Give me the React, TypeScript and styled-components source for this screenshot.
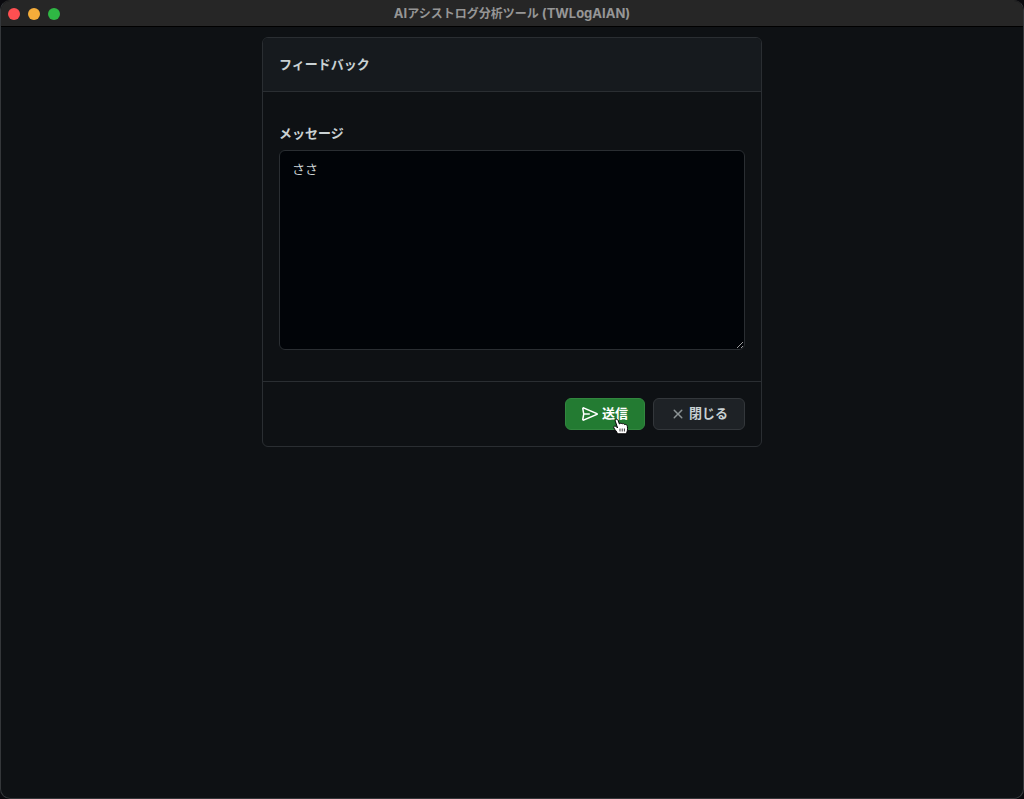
import React, { useState } from "react";
import styled, { createGlobalStyle } from "styled-components";

const GlobalStyle = createGlobalStyle`
  * { box-sizing: border-box; }
  html { background: #0a0a0e; color-scheme: dark; }
  body {
    margin: 0;
    color: #c9d1d3;
    font-family: "Liberation Sans", "Noto Sans CJK JP", sans-serif;
    font-size: 13px;
    line-height: 20px;
  }
`;

const Window = styled.div`
  display: flex;
  flex-direction: column;
  min-height: 100vh;
  background: #0e1114;
  border: 1px solid #34373a;
  border-top-color: #262626;
  border-radius: 10px;
  overflow: hidden;
`;

const TitleBar = styled.header`
  display: grid;
  grid-template-columns: 1fr auto 1fr;
  align-items: center;
  height: 26px;
  padding: 0 7px;
  background: #262626;
  border-bottom: 1px solid #000;
`;

const Lights = styled.div`
  display: flex;
  gap: 8px;
`;

const Light = styled.button<{ $color: string }>`
  width: 12px;
  height: 12px;
  padding: 0;
  border: 0;
  border-radius: 50%;
  background: ${(p) => p.$color};
`;

const Title = styled.h1`
  margin: 0;
  padding-bottom: 1px;
  color: #969696;
  font-family: Inter, "Noto Sans CJK JP", sans-serif;
  font-size: 13px;
  font-weight: 700;
  line-height: 20px;
`;

const TitleKana = styled.span`
  font-size: 12px;
`;

const Main = styled.main`
  flex: 1;
  padding: 10px 16px;
`;

const Card = styled.form`
  max-width: 500px;
  margin: 0 auto;
  border: 1px solid #2a2e32;
  border-radius: 6px;
  overflow: hidden;
`;

const CardHeader = styled.div`
  padding: 17px 16px 16px;
  background: #161a1e;
  border-bottom: 1px solid #2a2e32;
`;

const Heading = styled.h2`
  margin: 0;
  font-size: 13px;
  font-weight: 700;
  line-height: 20px;
`;

const CardBody = styled.div`
  padding: 32px 16px 31px;
`;

const Label = styled.label`
  display: block;
  margin-bottom: 6px;
  font-weight: 700;
`;

const Message = styled.textarea`
  display: block;
  width: 100%;
  height: 200px;
  padding: 9px 12px;
  color: #c9d1d3;
  background: #010408;
  border: 1px solid #2a2e32;
  border-radius: 6px;
  outline: none;
  font: inherit;
  resize: vertical;
`;

const CardFooter = styled.div`
  display: flex;
  justify-content: flex-end;
  gap: 8px;
  padding: 16px;
  border-top: 1px solid #2a2e32;
`;

const Button = styled.button<{ $primary?: boolean }>`
  position: relative;
  display: flex;
  align-items: center;
  gap: ${(p) => (p.$primary ? 4 : 3)}px;
  height: 32px;
  padding: 0 16px;
  color: ${(p) => (p.$primary ? "#ffffff" : "#c9d1d3")};
  background: ${(p) => (p.$primary ? "#237b32" : "#1e2226")};
  border: 1px solid ${(p) => (p.$primary ? "#32873f" : "#33373b")};
  border-radius: 6px;
  font: inherit;
  font-weight: 700;
  cursor: pointer;
`;

const Icon = styled.svg`
  width: 16px;
  height: 16px;
  fill: currentColor;
`;

const CloseIcon = styled(Icon)`
  color: #8b9294;
`;

const Pointer = styled.svg`
  position: absolute;
  left: 47px;
  top: 19px;
  width: 16px;
  height: 17px;
  pointer-events: none;
`;

export default function App() {
  const [message, setMessage] = useState("ささ");
  return (
    <>
      <GlobalStyle />
      <Window>
        <TitleBar>
          <Lights>
            <Light $color="#ff4f51" aria-label="ウィンドウを閉じる" />
            <Light $color="#f5ad3a" aria-label="最小化" />
            <Light $color="#2fb744" aria-label="最大化" />
          </Lights>
          <Title>
            AI<TitleKana>アシストログ分析ツール</TitleKana> (TWLogAIAN)
          </Title>
        </TitleBar>
        <Main>
          <Card onSubmit={(e) => e.preventDefault()}>
            <CardHeader>
              <Heading>フィードバック</Heading>
            </CardHeader>
            <CardBody>
              <Label htmlFor="message">メッセージ</Label>
              <Message id="message" value={message} onChange={(e) => setMessage(e.target.value)} />
            </CardBody>
            <CardFooter>
              <Button $primary type="submit">
                <Icon viewBox="0 0 16 16" aria-hidden="true">
                  <path d="M1.592 2.712L2.38 7.25h4.87a.75.75 0 110 1.5H2.38l-.788 4.538L13.929 8 1.592 2.712zM.989 8L.064 2.68a1.341 1.341 0 011.85-1.462l13.402 5.744a1.13 1.13 0 010 2.076L1.913 14.782a1.341 1.341 0 01-1.85-1.463L.99 8z" />
                </Icon>
                送信
                <Pointer viewBox="0 0 16 17" aria-hidden="true">
                  <path
                    d="M4.5 15.8C4 13.5 1.800 12 .8 9.800C.2 8.200 2 7.500 3.200 8.600L4.600 10L2.300 3.200C1.700 1.200 4.200.3 5 2.300L6.400 6C7 5 8.500 5 9 6C10 5.200 11.200 5.600 11.600 6.600C13 6 14 6.800 14.300 8.300C14.900 11 14.300 13.500 13.300 15.800Z"
                    fill="#fff"
                    stroke="#000"
                  />
                  <path d="M7 10.500V13.500M9.200 10.500V13.500M11.400 10.500V13.500" stroke="#000" fill="none" strokeWidth=".8" />
                </Pointer>
              </Button>
              <Button type="button">
                <CloseIcon viewBox="0 0 16 16" aria-hidden="true">
                  <path d="M3.720 3.720a.75.75 0 011.060 0L8 6.940l3.220-3.220a.75.75 0 111.060 1.060L9.060 8l3.220 3.220a.75.75 0 11-1.060 1.060L8 9.060l-3.220 3.220a.75.75 0 01-1.060-1.060L6.940 8 3.720 4.780a.75.75 0 010-1.060z" />
                </CloseIcon>
                閉じる
              </Button>
            </CardFooter>
          </Card>
        </Main>
      </Window>
    </>
  );
}
